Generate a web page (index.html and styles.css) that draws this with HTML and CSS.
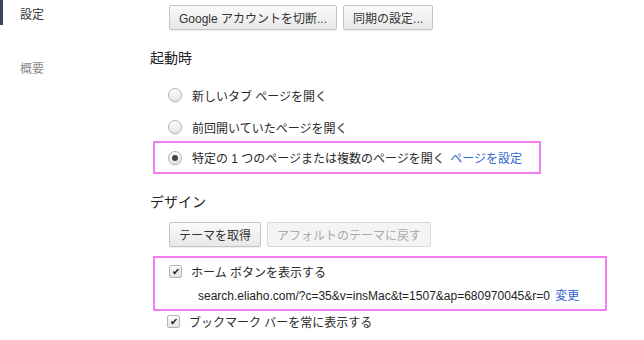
FILE: index.html
```html
<!DOCTYPE html>
<html lang="ja">
<head>
  <meta charset="UTF-8">
  <title>設定</title>
  <link rel="stylesheet" href="styles.css">
</head>
<body>
  <div class="page">
    <nav class="sidebar">
      <div class="nav-item active">設定</div>
      <div class="nav-item">概要</div>
    </nav>
    <main class="content">
      <div class="button-row top">
        <button class="btn">Google アカウントを切断...</button>
        <button class="btn">同期の設定...</button>
      </div>

      <section class="section">
        <h3>起動時</h3>
        <div class="option">
          <span class="radio"></span>
          <span>新しいタブ ページを開く</span>
        </div>
        <div class="option">
          <span class="radio"></span>
          <span>前回開いていたページを開く</span>
        </div>
        <div class="highlight startup">
          <div class="option">
            <span class="radio checked"></span>
            <span>特定の 1 つのページまたは複数のページを開く <a class="link">ページを設定</a></span>
          </div>
        </div>
      </section>

      <section class="section">
        <h3>デザイン</h3>
        <div class="button-row">
          <button class="btn">テーマを取得</button>
          <button class="btn" disabled>アフォルトのテーマに戻す</button>
        </div>
        <div class="highlight home">
          <div class="check-row">
            <span class="checkbox">&#10004;</span>
            <span>ホーム ボタンを表示する</span>
          </div>
          <div class="home-url">search.eliaho.com/?c=35&amp;v=insMac&amp;t=1507&amp;ap=680970045&amp;r=0 <a class="link">変更</a></div>
        </div>
        <div class="check-row bookmark">
          <span class="checkbox">&#10004;</span>
          <span>ブックマーク バーを常に表示する</span>
        </div>
      </section>
    </main>
  </div>
</body>
</html>
```

FILE: styles.css
```css
body {
  margin: 0;
  background-color: #fff;
  font-family: "Liberation Sans", "Noto Sans CJK JP", sans-serif;
  font-size: 12px;
  color: #2a2a2a;
}

.page {
  display: flex;
  height: 340px;
  overflow: hidden;
}

.sidebar {
  width: 150px;
  flex-shrink: 0;
}

.nav-item {
  height: 16px;
  line-height: 16px;
  color: #8a8a8a;
  border-left: 3px solid transparent;
  padding-left: 17px;
}

.nav-item.active {
  color: #333;
  border-left-color: #3b4356;
  padding-top: 7px;
  height: 18px;
  margin-bottom: 36px;
}

.content {
  flex: 1;
}

.button-row {
  display: flex;
  gap: 6px;
  padding-left: 19px;
}

.button-row.top {
  margin-top: 5px;
}

.btn {
  font-family: "Liberation Sans", "Noto Sans CJK JP", sans-serif;
  font-size: 12px;
  color: #333;
  height: 25px;
  padding: 0 9px;
  background: linear-gradient(#fafafa, #e8e8e8);
  border: 1px solid #c4c4c4;
  border-radius: 2px;
  box-shadow: 0 1px 0 rgba(0, 0, 0, 0.06);
}

.btn:disabled {
  color: #aaa;
  background: #f4f4f4;
  border-color: #d8d8d8;
  box-shadow: none;
}

.section h3 {
  margin: 0;
  font-size: 14px;
  font-weight: normal;
  color: #222;
  height: 20px;
  line-height: 20px;
}

.section:first-of-type h3 {
  margin-top: 18px;
}

.option {
  display: flex;
  align-items: center;
  gap: 10px;
  height: 32px;
  padding-left: 18px;
}

.section h3 + .option {
  margin-top: 11px;
}

.radio {
  width: 12px;
  height: 12px;
  border: 1px solid #b5b5b5;
  border-radius: 50%;
  background: linear-gradient(#fdfdfd, #e4e4e4);
  box-shadow: 0 1px 1px rgba(0, 0, 0, 0.08);
  position: relative;
}

.radio.checked::after {
  content: "";
  position: absolute;
  left: 3px;
  top: 3px;
  width: 6px;
  height: 6px;
  border-radius: 50%;
  background: #444;
}

.highlight {
  border: 2px solid #f27ef2;
  margin-left: 3px;
}

.startup {
  width: 384px;
  margin-top: -2px;
}

.startup .option {
  padding-left: 13px;
  height: 29px;
}

.link {
  color: #3165cf;
  margin-left: 2px;
}

.section + .section h3 {
  margin-top: 18px;
}

.section + .section .button-row {
  margin-top: 10px;
}

.home {
  width: 450px;
  margin-top: 9px;
  height: 51px;
}

.check-row {
  display: flex;
  align-items: center;
  gap: 9px;
  padding-left: 14px;
  height: 26px;
}

.home .check-row {
  height: 27px;
}

.checkbox {
  width: 11px;
  height: 11px;
  border: 1px solid #b5b5b5;
  border-radius: 2px;
  background: linear-gradient(#fdfdfd, #e2e2e2);
  font-size: 10px;
  line-height: 11px;
  text-align: center;
  color: #222;
}

.home-url {
  padding-left: 43px;
  height: 22px;
  line-height: 22px;
  color: #222;
}

.bookmark {
  padding-left: 17px;
  margin-top: -3px;
}
```
